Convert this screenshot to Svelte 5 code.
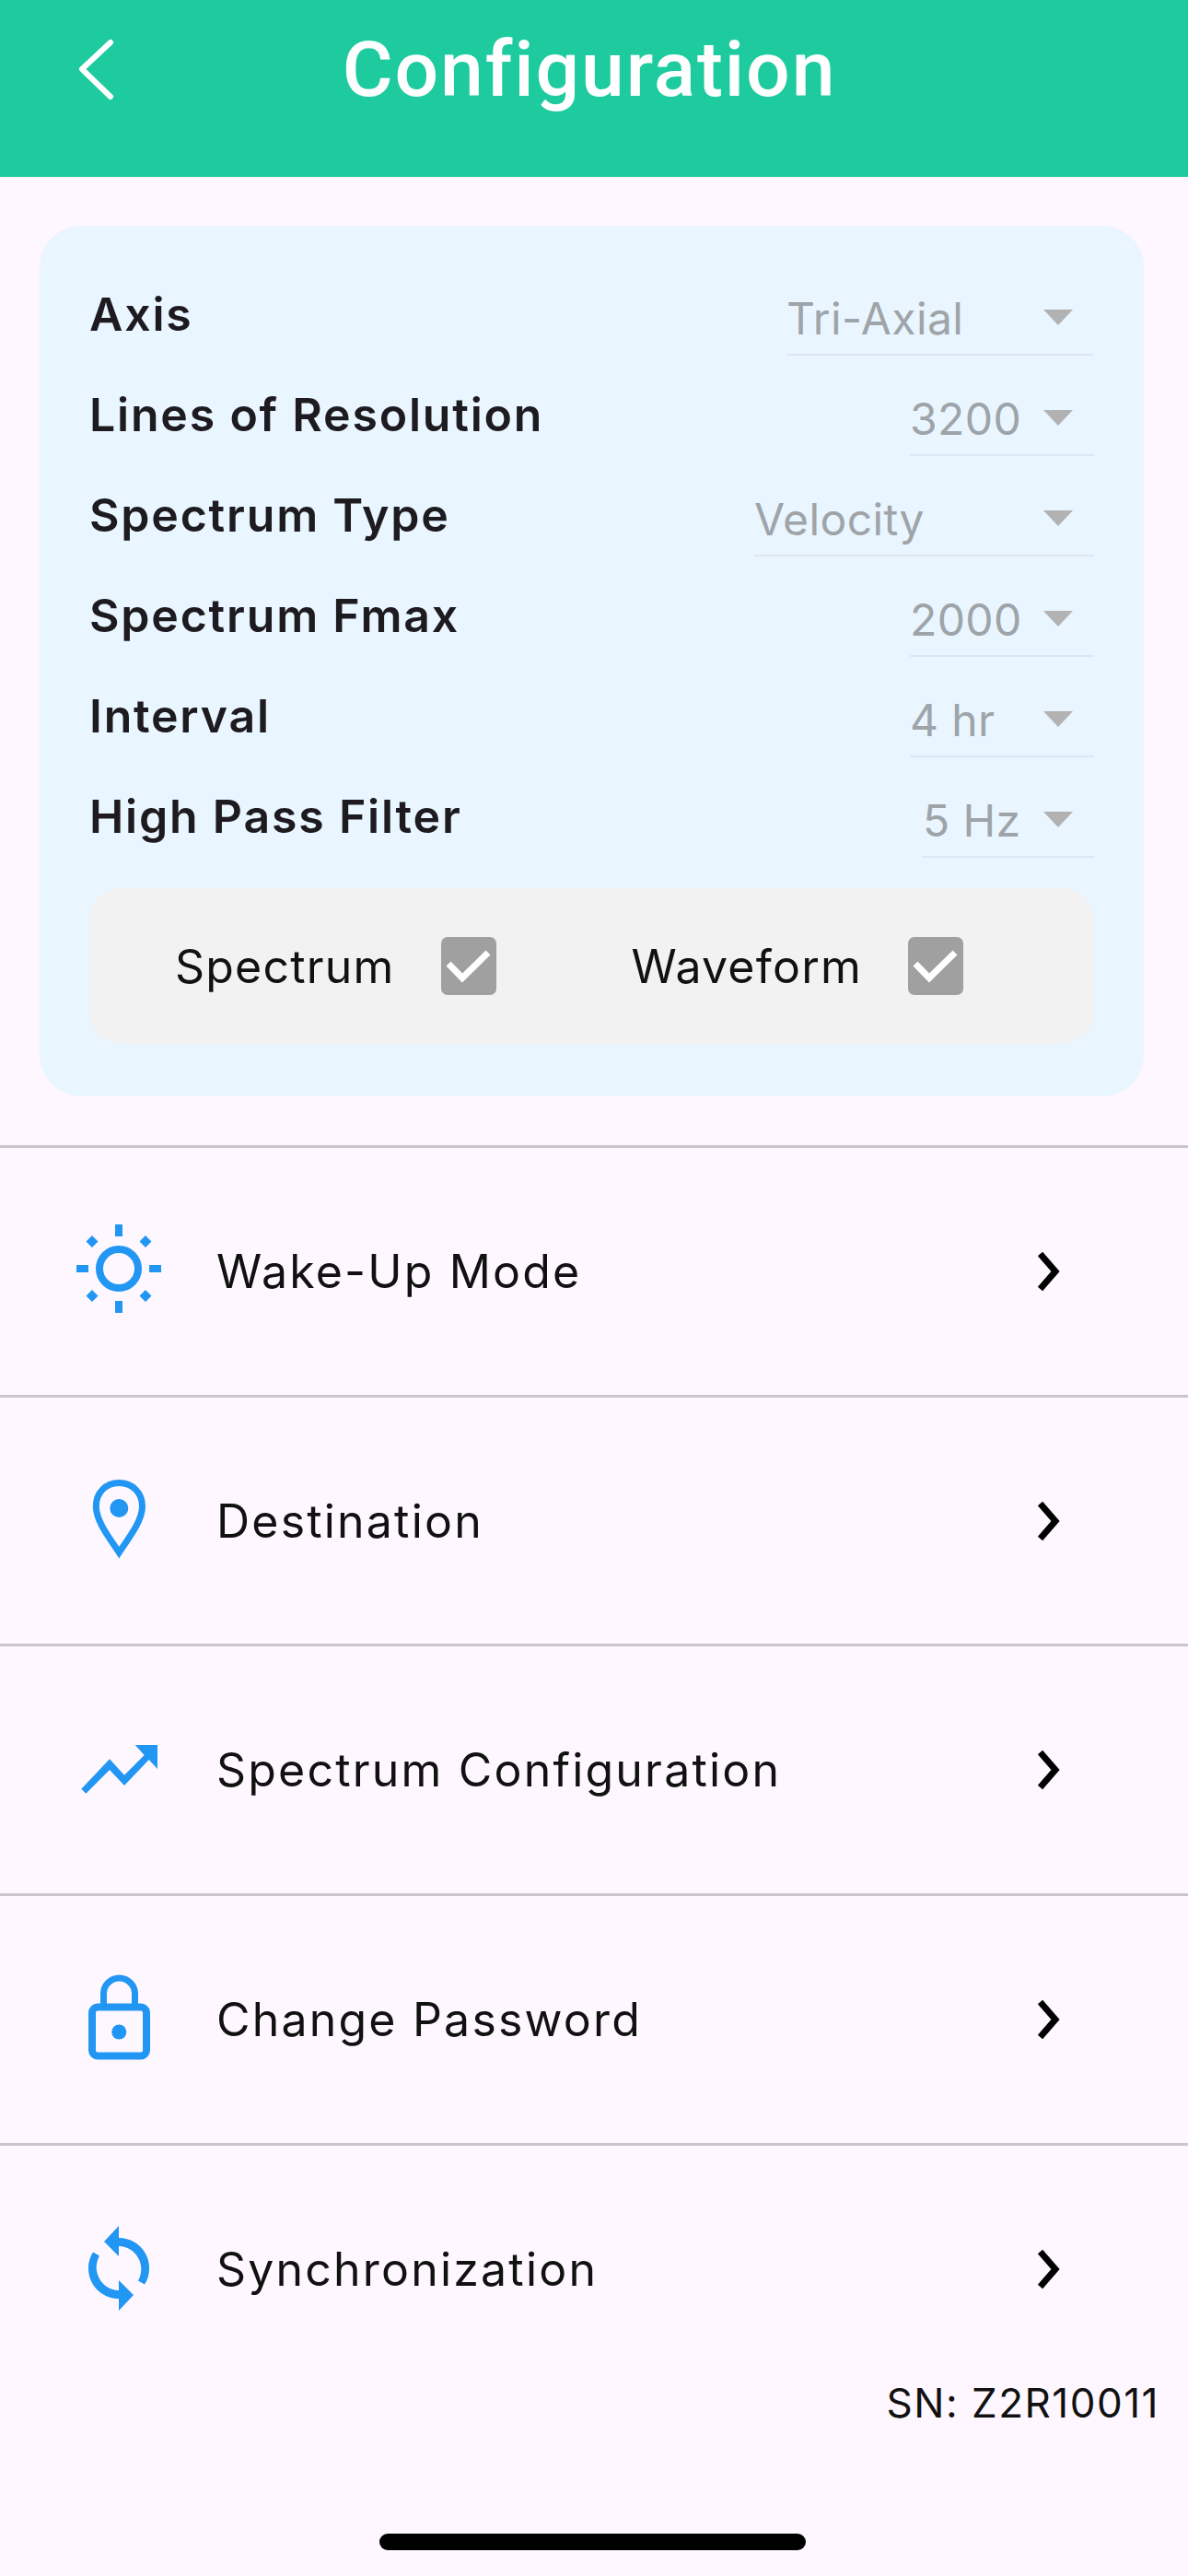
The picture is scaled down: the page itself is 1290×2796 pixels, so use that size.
<script>
  const settings = [
    { label: "Axis", value: "Tri-Axial", width: 334 },
    { label: "Lines of Resolution", value: "3200", width: 200 },
    { label: "Spectrum Type", value: "Velocity", width: 369 },
    { label: "Spectrum Fmax", value: "2000", width: 200 },
    { label: "Interval", value: "4 hr", width: 200 },
    { label: "High Pass Filter", value: "5 Hz", width: 186 }
  ];
  const checks = ["Spectrum", "Waveform"];
  const menu = [
    { key: "sun", label: "Wake-Up Mode" },
    { key: "pin", label: "Destination" },
    { key: "trend", label: "Spectrum Configuration" },
    { key: "lock", label: "Change Password" },
    { key: "sync", label: "Synchronization" }
  ];
</script>

<div class="page">
  <header class="topbar">
    <svg class="back" viewBox="0 0 40 70" width="40" height="70">
      <path d="M36 5 L5 34 L36 64" fill="none" stroke="#fff" stroke-width="6" stroke-linecap="round" stroke-linejoin="round" />
    </svg>
    <h1>Configuration</h1>
  </header>

  <section class="card">
    {#each settings as s}
      <div class="setting">
        <span class="label">{s.label}</span>
        <div class="select" style="width: {s.width}px">
          <span class="value">{s.value}</span>
          <span class="caret"></span>
        </div>
      </div>
    {/each}

    <div class="checks">
      {#each checks as c}
        <div class="check">
          <span>{c}</span>
          <svg viewBox="0 0 60 63" width="60" height="63">
            <rect width="60" height="63" rx="7" fill="#a0a0a0" />
            <path d="M8 29 L23 44.5 L51 17" fill="none" stroke="#fff" stroke-width="7" />
          </svg>
        </div>
      {/each}
    </div>
  </section>

  <nav class="menu">
    {#each menu as m}
      <div class="item">
        <span class="icon">
          {#if m.key === "sun"}
            <svg viewBox="0 0 96 96" width="96" height="96" fill="#2196f3">
              <circle cx="48" cy="48" r="21" fill="none" stroke="#2196f3" stroke-width="8" />
              <rect x="44" y="0" width="8" height="13" />
              <rect x="44" y="83" width="8" height="13" />
              <rect x="2" y="44" width="13" height="8" />
              <rect x="81" y="44" width="13" height="8" />
              <path d="M19 12 L25.500 18.500 L19 25 L12.500 18.500Z M77 12 L83.500 18.500 L77 25 L70.500 18.500Z M19 71 L25.500 77.500 L19 84 L12.500 77.500Z M77 71 L83.500 77.500 L77 84 L70.500 77.500Z" />
            </svg>
          {:else if m.key === "pin"}
            <svg viewBox="0 0 96 96" width="96" height="96">
              <path d="M48.300 85 C40 72 23.300 52 23.300 35 C23.300 20 34 9.500 48.300 9.500 C62.500 9.500 73.500 20 73.500 35 C73.500 52 56.600 72 48.300 85Z" fill="none" stroke="#2196f3" stroke-width="7" />
              <circle cx="48.300" cy="37" r="10" fill="#2196f3" />
            </svg>
          {:else if m.key === "trend"}
            <svg viewBox="0 0 96 96" width="96" height="96" fill="#2196f3">
              <path d="M7.300 71.700 L38 39.300 L54 56.700 L75.700 35 L65.700 24 L90 24 L90 50 L80.700 40 L54 68 L38 51 L12.300 76.700Z" />
            </svg>
          {:else if m.key === "lock"}
            <svg viewBox="0 0 96 96" width="96" height="96">
              <path d="M31.500 35 V23 a17 17 0 0 1 34 0 V35" fill="none" stroke="#2196f3" stroke-width="7" />
              <rect x="19" y="37.500" width="59" height="53" rx="6" fill="none" stroke="#2196f3" stroke-width="8" />
              <circle cx="48.300" cy="64.500" r="8" fill="#2196f3" />
            </svg>
          {:else}
            <svg viewBox="0 0 96 96" width="96" height="96" fill="#2196f3">
              <path d="M48 4 L32 21 L48 37 L48 26 A25 25 0 0 1 69 63.400 L76 67.600 A33 33 0 0 0 48 17Z" />
              <path d="M48 4 L32 21 L48 37 L48 26 A25 25 0 0 1 69 63.400 L76 67.600 A33 33 0 0 0 48 17Z" transform="rotate(180 48 50)" />
            </svg>
          {/if}
        </span>
        <span class="item-label">{m.label}</span>
        <svg class="chevron" viewBox="0 0 25 44" width="25" height="44">
          <path d="M3.500 3 L20 22 L3.500 41" fill="none" stroke="#000" stroke-width="7" />
        </svg>
      </div>
    {/each}
  </nav>

  <p class="serial">SN: Z2R10011</p>
  <div class="home"></div>
</div>

<style>
  :global(body) {
    margin: 0;
    background: #fef7ff;
  }

  .page {
    width: 1290px;
    height: 2796px;
    background: #fef7ff;
    font-family: Inter, "Liberation Sans", sans-serif;
    color: #1d1b20;
    display: flex;
    flex-direction: column;
    overflow: hidden;
  }

  .topbar {
    height: 192px;
    background: #1ecb9f;
    position: relative;
    flex-shrink: 0;
  }

  .back {
    position: absolute;
    left: 84px;
    top: 41px;
  }

  h1 {
    margin: 0;
    box-sizing: border-box;
    width: 100%;
    padding: 27px 10px 0 0;
    text-align: center;
    color: #fff;
    font-size: 84px;
    line-height: 98px;
    font-weight: 500;
    font-family: Roboto, sans-serif;
    letter-spacing: 1.9px;
  }

  .card {
    margin: 53px 48px 0 43px;
    height: 945px;
    box-sizing: border-box;
    background: #e9f5ff;
    border-radius: 45px;
    padding: 65px 54px 0 54px;
  }

  .setting {
    height: 109px;
    display: flex;
    justify-content: space-between;
  }

  .label {
    font-size: 50px;
    font-weight: 600;
    line-height: 62px;
    letter-spacing: 1.8px;
  }

  .select {
    height: 76px;
    box-sizing: border-box;
    border-bottom: 2px solid #dde7ef;
    position: relative;
    padding-top: 4px;
  }

  .value {
    font-size: 48px;
    line-height: 64px;
    color: #9ea4a8;
    letter-spacing: 0.4px;
  }

  .caret {
    position: absolute;
    right: 23px;
    top: 26px;
    width: 0;
    height: 0;
    border-left: 16px solid transparent;
    border-right: 16px solid transparent;
    border-top: 17px solid #b2b2b2;
  }

  .checks {
    height: 169px;
    background: #f2f2f2;
    border-radius: 35px;
    display: flex;
    align-items: center;
    padding-left: 93px;
    gap: 147px;
  }

  .check {
    display: flex;
    align-items: center;
    gap: 50px;
    font-size: 50px;
    letter-spacing: 1.2px;
    color: #111;
  }

  .menu {
    margin-top: 53px;
  }

  .item {
    height: 270.7px;
    box-sizing: border-box;
    border-top: 3px solid #cac4d0;
    display: flex;
    align-items: center;
    padding-left: 81px;
  }

  .icon {
    width: 96px;
    height: 96px;
    margin: 0 58px 6px 0;
  }

  .item-label {
    flex: 1;
    font-size: 50px;
    letter-spacing: 2.2px;
    color: #111;
  }

  .chevron {
    margin-right: 139px;
  }

  .serial {
    margin: -18px 31px 0 0;
    text-align: right;
    font-size: 44px;
    line-height: 60px;
    color: #111;
    letter-spacing: 1.5px;
  }

  .home {
    width: 463px;
    height: 18px;
    border-radius: 9px;
    background: #000;
    margin: 112px 0 0 412px;
  }
</style>
